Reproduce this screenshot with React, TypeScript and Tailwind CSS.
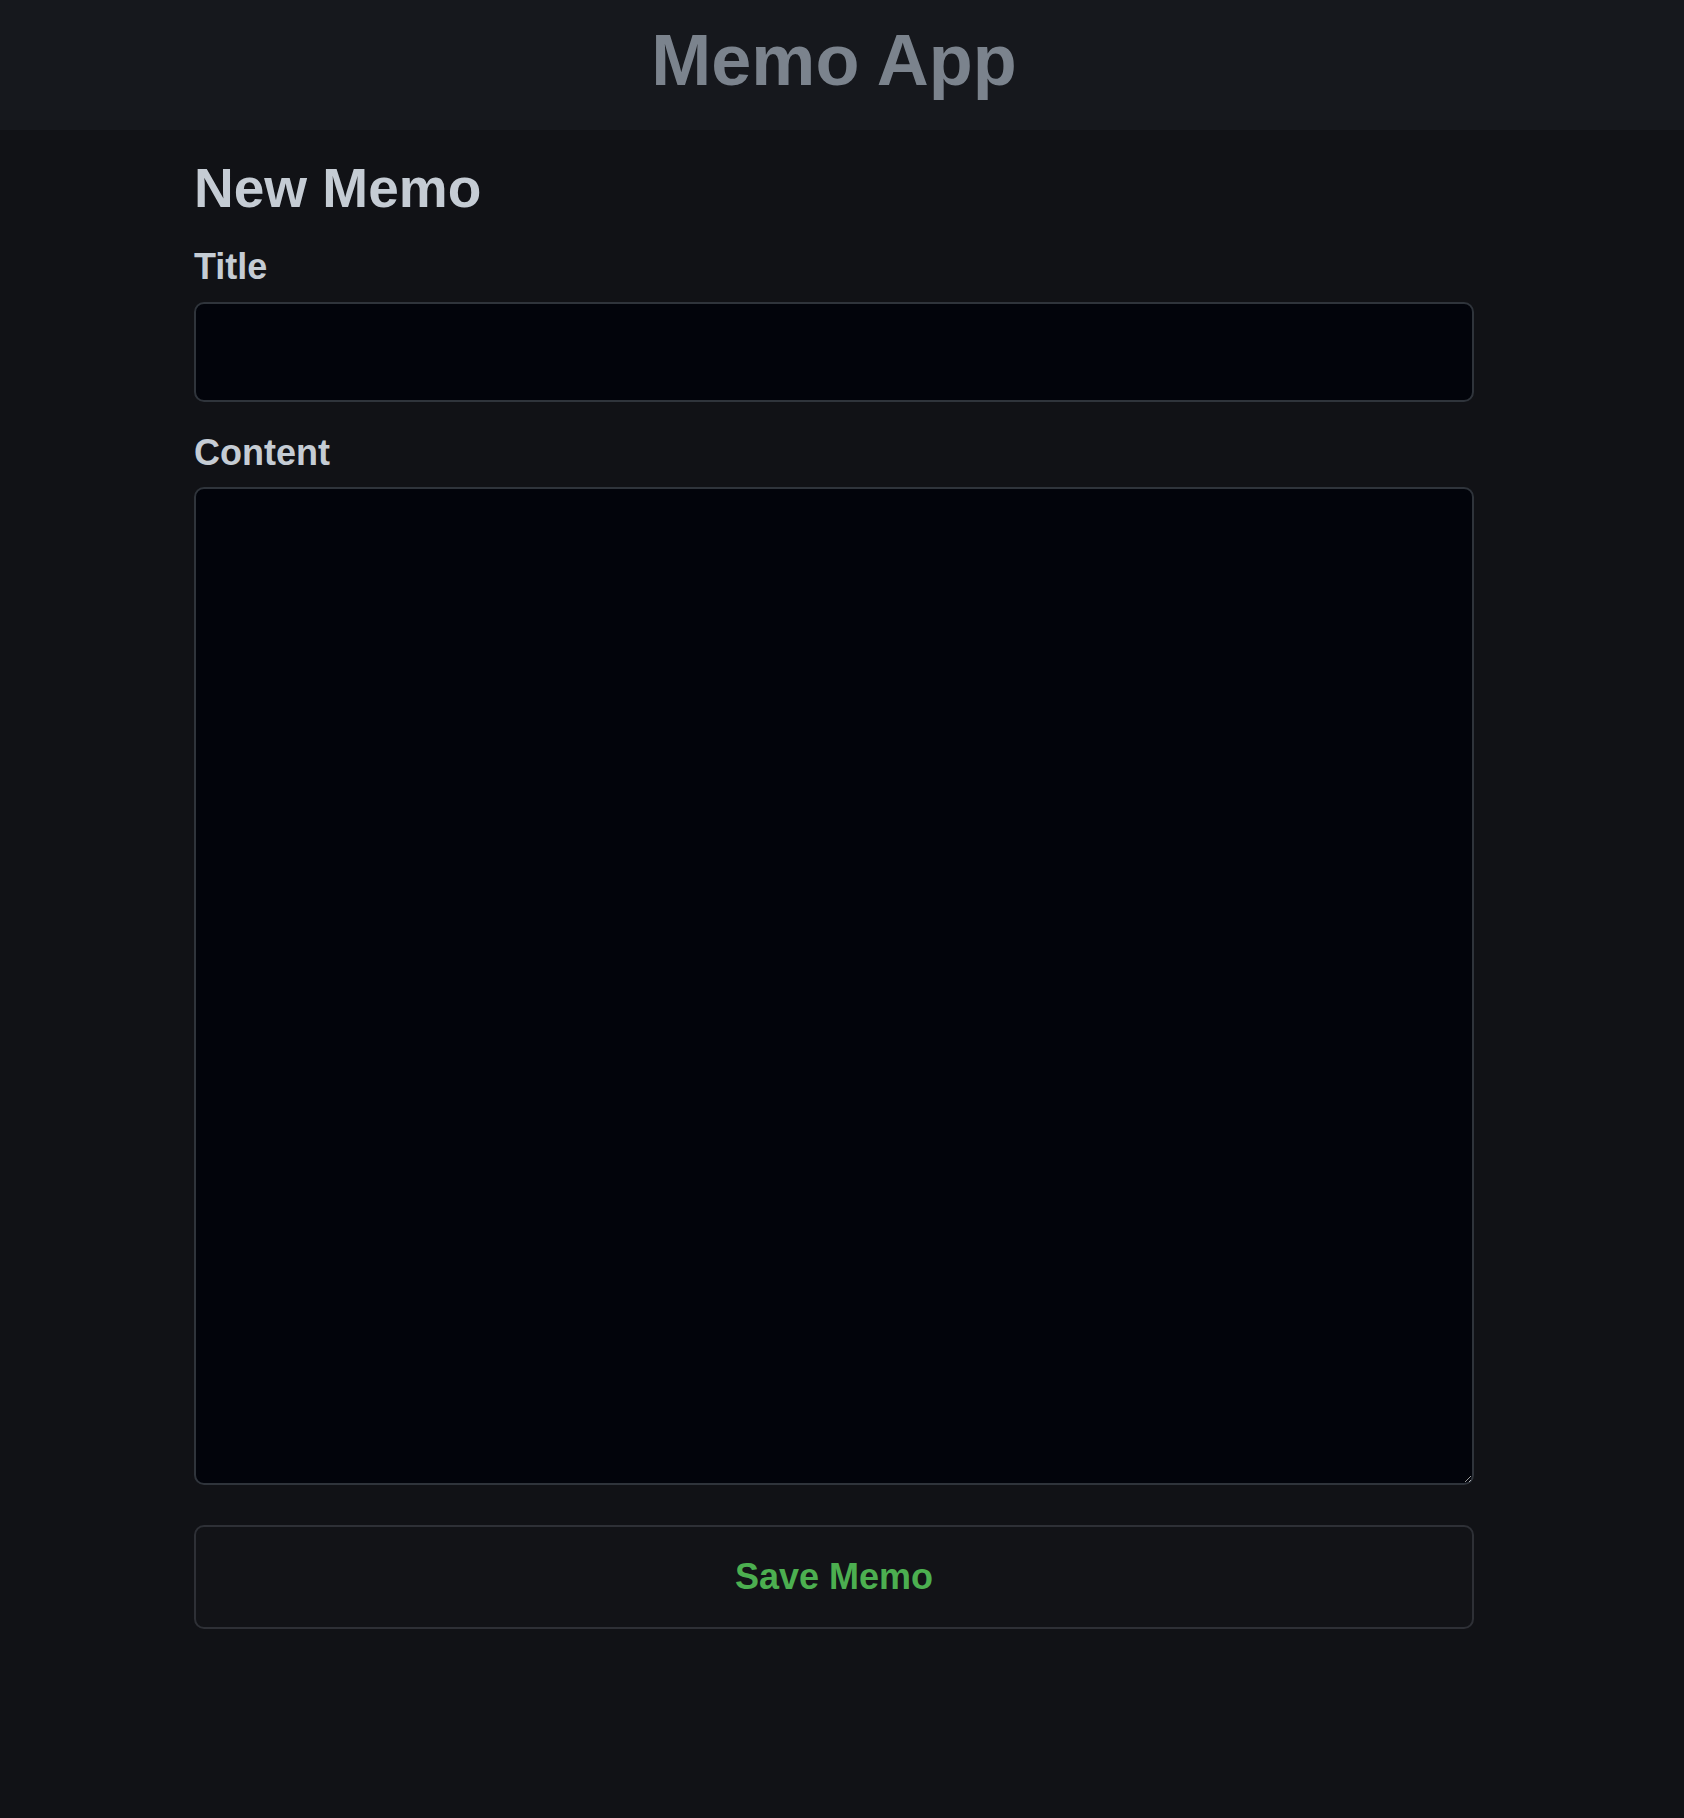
import { useState } from "react";

export default function App() {
  const [title, setTitle] = useState("");
  const [content, setContent] = useState("");

  return (
    <div
      className="min-h-[1818px] bg-[#111216] pr-4 [color-scheme:dark]"
      style={{ fontFamily: '"Liberation Sans", Arial, sans-serif' }}
    >
      {/* Header */}
      <header className="-mr-4 h-[130px] bg-[#16181d] pr-4 pt-[24px]">
        <h1 className="text-center text-[72px] font-bold leading-[72px] text-[#7b838d]">Memo App</h1>
      </header>

      <main className="mx-auto w-[1280px] pt-[31px]">
        <h2 className="text-[55px] font-bold leading-[55px] text-[#c5ccd4]">New Memo</h2>

        <form
          className="flex flex-col"
          onSubmit={(e) => {
            e.preventDefault();
          }}
        >
          <label htmlFor="title" className="mt-[33px] text-[36px] font-bold leading-[36px] text-[#c5ccd4]">
            Title
          </label>
          <input
            id="title"
            value={title}
            onChange={(e) => setTitle(e.target.value)}
            className="mt-[17px] h-[100px] w-full rounded-[10px] border-2 border-[#2f343b] bg-[#02040b] px-4 text-[36px] text-[#c5ccd4] outline-none"
          />

          <label htmlFor="content" className="mt-[33px] text-[36px] font-bold leading-[36px] text-[#c5ccd4]">
            Content
          </label>
          <textarea
            id="content"
            value={content}
            onChange={(e) => setContent(e.target.value)}
            className="mt-[16px] h-[998px] w-full rounded-[10px] border-2 border-[#2f343b] bg-[#02040b] p-4 text-[36px] text-[#c5ccd4] outline-none"
          />

          <button
            type="submit"
            className="mt-[40px] h-[104px] w-full rounded-[10px] border-2 border-[#2e3036] bg-[#121317] text-[36px] font-bold leading-[36px] text-[#4caf50]"
          >
            Save Memo
          </button>
        </form>
      </main>
    </div>
  );
}
